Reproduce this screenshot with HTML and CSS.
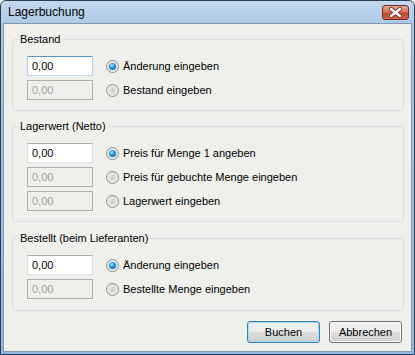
FILE: index.html
```html
<!DOCTYPE html>
<html lang="de">
<head>
  <meta charset="UTF-8">
  <meta name="viewport" content="width=device-width, initial-scale=1.0">
  <title>Lagerbuchung</title>
  <link rel="stylesheet" href="styles.css">
</head>
<body>
  <div class="window">
    <div class="titlebar">
      <span class="title">Lagerbuchung</span>
      <span class="close">
        <svg width="27" height="15" viewBox="0 0 27 15">
          <path d="M9 4 L18 11 M18 4 L9 11" stroke="#7a3226" stroke-width="4.2" stroke-linecap="round"/>
          <path d="M9 4 L18 11 M18 4 L9 11" stroke="#ffffff" stroke-width="2.4" stroke-linecap="round"/>
        </svg>
      </span>
    </div>

    <div class="client">
      <!-- Bestand -->
      <div class="group g1">
        <span class="legend">Bestand</span>
        <div class="row">
          <span class="field active">0,00</span>
          <span class="radio checked"></span>
          <span class="label">Änderung eingeben</span>
        </div>
        <div class="row">
          <span class="field disabled">0,00</span>
          <span class="radio"></span>
          <span class="label">Bestand eingeben</span>
        </div>
      </div>

      <!-- Lagerwert -->
      <div class="group g2">
        <span class="legend">Lagerwert (Netto)</span>
        <div class="row">
          <span class="field">0,00</span>
          <span class="radio checked"></span>
          <span class="label">Preis für Menge 1 angeben</span>
        </div>
        <div class="row">
          <span class="field disabled">0,00</span>
          <span class="radio"></span>
          <span class="label">Preis für gebuchte Menge eingeben</span>
        </div>
        <div class="row">
          <span class="field disabled">0,00</span>
          <span class="radio"></span>
          <span class="label">Lagerwert eingeben</span>
        </div>
      </div>

      <!-- Bestellt -->
      <div class="group g3">
        <span class="legend">Bestellt (beim Lieferanten)</span>
        <div class="row">
          <span class="field">0,00</span>
          <span class="radio checked"></span>
          <span class="label">Änderung eingeben</span>
        </div>
        <div class="row">
          <span class="field disabled">0,00</span>
          <span class="radio"></span>
          <span class="label">Bestellte Menge eingeben</span>
        </div>
      </div>

      <div class="buttons">
        <span class="button default">Buchen</span>
        <span class="button">Abbrechen</span>
      </div>
    </div>
  </div>
</body>
</html>
```

FILE: styles.css
```css
body {
  margin: 0;
  font-family: "Liberation Sans", Arial, sans-serif;
  font-size: 11px;
  color: #000;
}

.window {
  width: 415px;
  height: 355px;
  box-sizing: border-box;
  border: 1px solid #2b3d55;
  border-radius: 6px 6px 0 0;
  background: linear-gradient(#c6d9ee, #abc8e6 24px, #8dbbe8 100%);
  padding: 0 2px 2px;
  display: flex;
  flex-direction: column;
}

.titlebar {
  height: 22px;
  display: flex;
  justify-content: space-between;
  align-items: center;
  padding: 0 3px 0 5px;
}

.title {
  font-size: 12px;
}

.close {
  display: flex;
  width: 27px;
  height: 15px;
  box-sizing: border-box;
  border: 1px solid #6e2b20;
  border-radius: 3px;
  background: linear-gradient(#e9a695, #d7785f 45%, #c24a2c 55%, #d2664a);
  margin-top: 1px;
}

.close svg {
  margin: -1px;
}

.client {
  flex: 1;
  background: #eff0ec;
  border: 1px solid #8297b0;
  padding: 0 7px 0 8px;
  display: flex;
  flex-direction: column;
}

.group {
  position: relative;
  border: 1px solid #d5dfe5;
  border-radius: 3px;
  padding: 16px 10px 10px 14px;
  display: flex;
  flex-direction: column;
  gap: 4px;
  margin-top: 15px;
}

.g3 {
  margin-top: 16px;
  padding-bottom: 11px;
}

.legend {
  position: absolute;
  top: -8px;
  left: 6px;
  padding: 0 1px;
  line-height: 14px;
  background: #eff0ec;
}

.row {
  display: flex;
  align-items: center;
  height: 20px;
}

.field {
  width: 66px;
  height: 20px;
  box-sizing: border-box;
  border: 1px solid;
  border-color: #abadb3 #dbdfe6 #e3e9ef #dbdfe6;
  background: #fff;
  padding: 0 4px;
  line-height: 18px;
}

.field.active {
  border-color: #5c93c7 #b5cde6 #c5daed #b5cde6;
}

.field.disabled {
  border-color: #adadad;
  background: #eff0ec;
  color: #9c9c9c;
}

.radio {
  width: 13px;
  height: 13px;
  box-sizing: border-box;
  border-radius: 50%;
  border: 1px solid #8f8f8f;
  background: radial-gradient(circle at 50% 50%, #c9c9c9 0, #e2e2e2 45%, #f6f6f6 100%);
  margin: 0 4px 0 13px;
  display: flex;
  align-items: center;
  justify-content: center;
}

.radio.checked::after {
  content: "";
  width: 7px;
  height: 7px;
  border-radius: 50%;
  background: radial-gradient(circle at 40% 35%, #c4eeff 0, #2d9fe8 35%, #0b4c92 100%);
}

.buttons {
  display: flex;
  justify-content: flex-end;
  gap: 9px;
  margin: 10px 2px 0 0;
}

.button {
  width: 73px;
  height: 22px;
  box-sizing: border-box;
  border: 1px solid #707070;
  border-radius: 3px;
  background: linear-gradient(#f2f2f2, #ebebeb 50%, #dddddd 50%, #cfcfcf);
  box-shadow: inset 0 0 0 1px #fbfbfb;
  display: flex;
  align-items: center;
  justify-content: center;
}

.button.default {
  border-color: #3c7fb1;
  box-shadow: inset 0 0 0 1px #9fdcf8;
}
```
